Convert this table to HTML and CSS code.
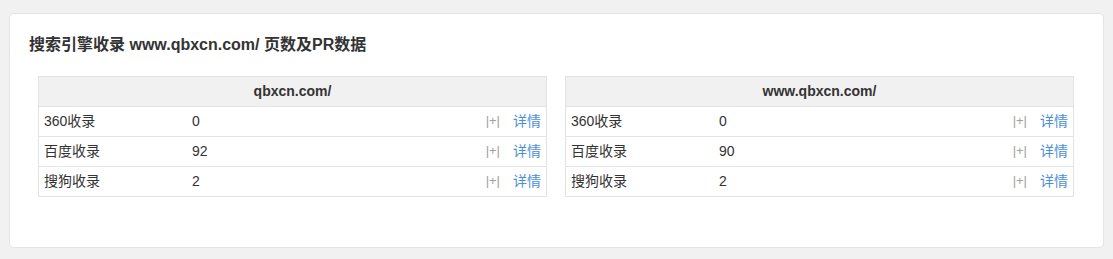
FILE: index.html
```html
<!DOCTYPE html>
<html lang="zh-CN">
<head>
<meta charset="utf-8">
<title>搜索引擎收录</title>
<link rel="stylesheet" href="styles.css">
</head>
<body>
<div class="card">
  <h2 class="title">搜索引擎收录 www.qbxcn.com/ 页数及PR数据</h2>
  <div class="tables">
    <div class="tbl">
      <div class="head">qbxcn.com/</div>
      <div class="row"><span class="name">360收录</span><span class="val">0</span><span class="plus">|+|</span><a class="more">详情</a></div>
      <div class="row"><span class="name">百度收录</span><span class="val">92</span><span class="plus">|+|</span><a class="more">详情</a></div>
      <div class="row"><span class="name">搜狗收录</span><span class="val">2</span><span class="plus">|+|</span><a class="more">详情</a></div>
    </div>
    <div class="tbl">
      <div class="head">www.qbxcn.com/</div>
      <div class="row"><span class="name">360收录</span><span class="val">0</span><span class="plus">|+|</span><a class="more">详情</a></div>
      <div class="row"><span class="name">百度收录</span><span class="val">90</span><span class="plus">|+|</span><a class="more">详情</a></div>
      <div class="row"><span class="name">搜狗收录</span><span class="val">2</span><span class="plus">|+|</span><a class="more">详情</a></div>
    </div>
  </div>
</div>
</body>
</html>
```

FILE: styles.css
```css
html, body {
  margin: 0;
  padding: 0;
  background: #f1f1f1;
  font-family: "Liberation Sans", "Noto Sans CJK SC", sans-serif;
  color: #333;
}
.card {
  margin: 13px 9px 0 9px;
  height: 235px;
  background: #fff;
  border: 1px solid #e4e4e4;
  border-radius: 5px;
  padding: 20px 19px;
  box-sizing: border-box;
}
.title {
  margin: 0;
  font-size: 16px;
  font-weight: bold;
  line-height: 22px;
  color: #333;
}
.tables {
  margin-top: 20px;
  padding: 0 10px 0 9px;
  display: grid;
  grid-template-columns: 1fr 1fr;
  gap: 18px;
}
.tbl {
  border: 1px solid #e3e3e3;
  border-bottom: none;
  font-size: 14px;
}
.head {
  height: 29px;
  line-height: 29px;
  background: #f1f1f1;
  text-align: center;
  font-weight: bold;
  border-bottom: 1px solid #e3e3e3;
}
.row {
  display: flex;
  align-items: center;
  padding: 0 5px 2px 5px;
  box-sizing: border-box;
  height: 30px;
  line-height: 20px;
  border-bottom: 1px solid #e3e3e3;
}
.name {
  width: 148px;
}
.val {
  flex: 1;
}
.plus {
  font-size: 13px;
  color: #a0a0a0;
  margin-right: 13px;
}
.more {
  color: #4a90d9;
  text-decoration: none;
}
```
